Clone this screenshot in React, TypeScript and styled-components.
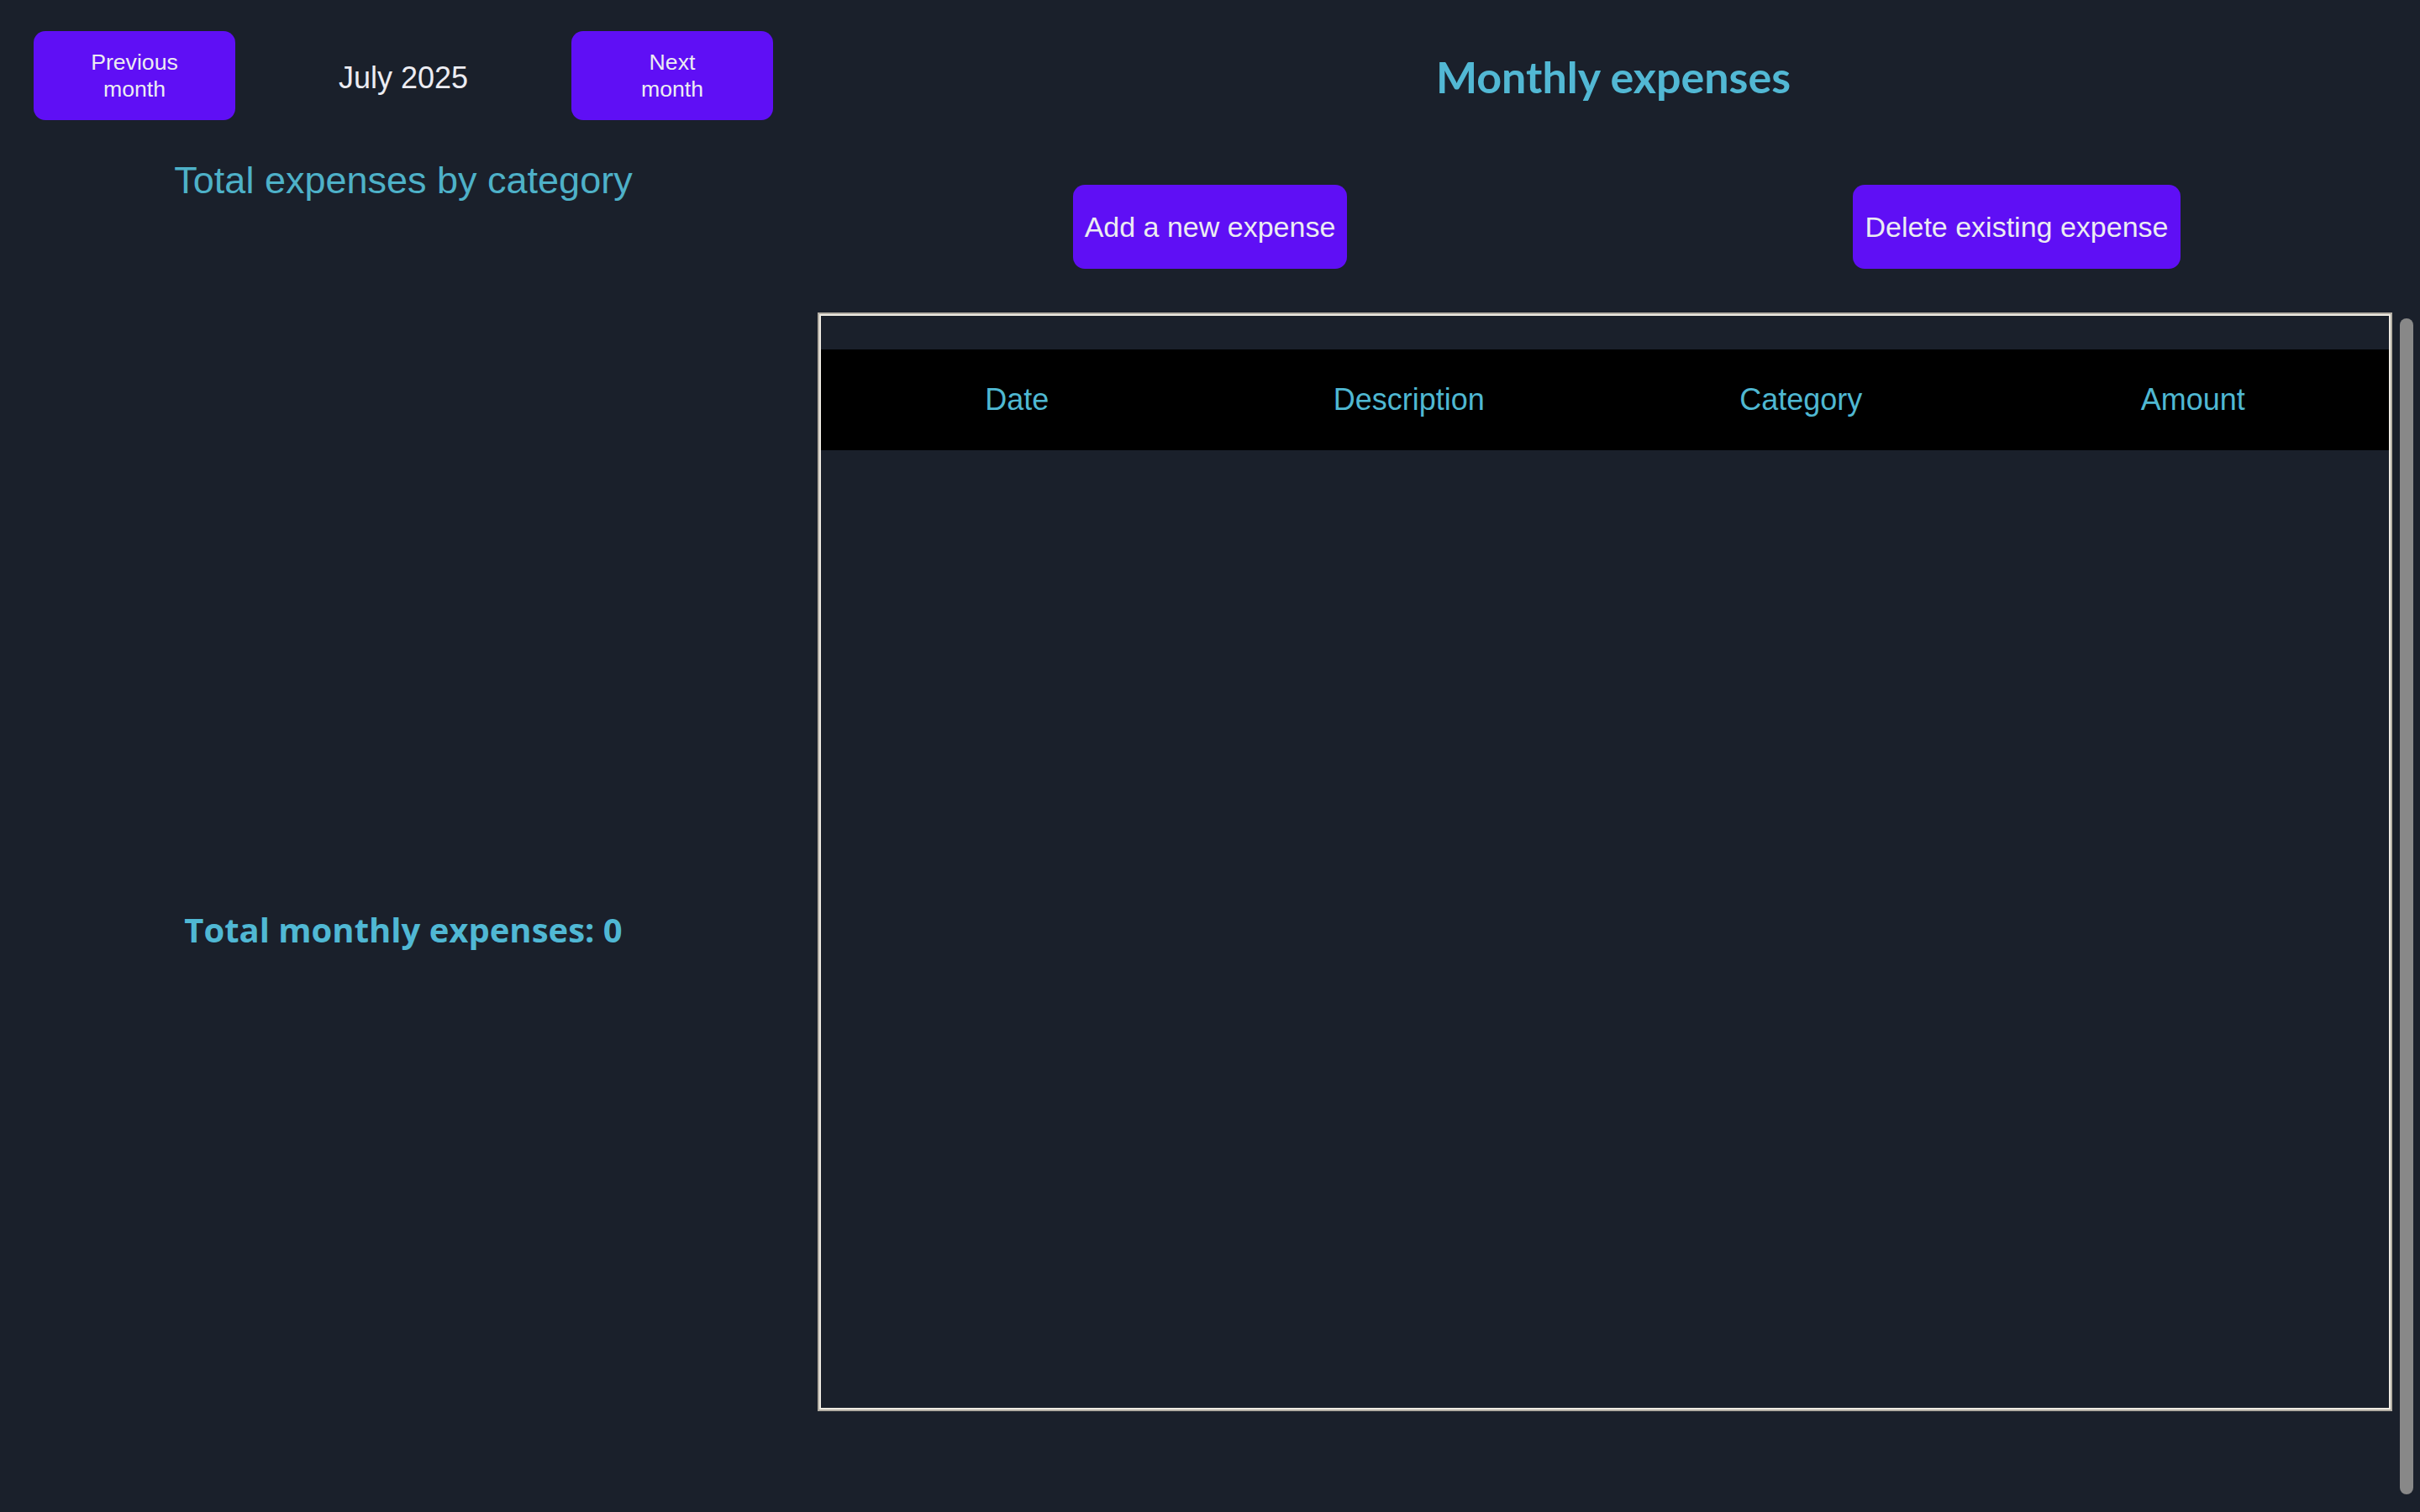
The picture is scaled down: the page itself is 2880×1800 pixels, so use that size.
import React from "react";
import styled, { createGlobalStyle } from "styled-components";

const GlobalStyle = createGlobalStyle`
  html, body {
    margin: 0;
    padding: 0;
    background: #1a202b;
  }
  body {
    font-family: "Liberation Sans", Arial, sans-serif;
    color: #ebebf0;
  }
  * { box-sizing: border-box; }
`;

const Page = styled.div`
  display: grid;
  grid-template-columns: 960px 1fr;
  height: 1800px;
  overflow: hidden;
  background: #1a202b;
`;

const LeftColumn = styled.section`
  display: flex;
  flex-direction: column;
  align-items: stretch;
  padding: 37px 40px 0;
`;

const NavRow = styled.div`
  display: flex;
  align-items: center;
  justify-content: space-between;
`;

const NavButton = styled.button`
  width: 240px;
  height: 106px;
  border: none;
  border-radius: 14px;
  background: #5f0ff5;
  color: #ececf2;
  font-family: "Liberation Sans", Arial, sans-serif;
  font-size: 26.67px;
  line-height: 32px;
  padding: 0 62px;
  text-align: center;
  cursor: pointer;
`;

const MonthLabel = styled.div`
  font-size: 36px;
  margin-top: 6px;
  color: #ececf2;
`;

const CategoryTitle = styled.h2`
  margin: 47px 0 0;
  font-size: 45px;
  line-height: 50px;
  font-weight: 400;
  text-align: center;
  color: #4eb1c8;
`;

const ChartArea = styled.div`
  height: 845px;
`;

const TotalLine = styled.div`
  text-align: center;
  font-family: "Open Sans", "Lato", sans-serif;
  font-weight: 700;
  font-size: 40px;
  line-height: 44px;
  color: #50b8d4;
`;

const RightColumn = styled.section`
  display: flex;
  flex-direction: column;
  padding-top: 62px;
`;

const MainTitle = styled.h1`
  margin: 0;
  text-align: center;
  font-family: "Lato", "Open Sans", sans-serif;
  font-weight: 700;
  font-size: 52px;
  line-height: 58px;
  color: #52b8d4;
`;

const ActionRow = styled.div`
  display: grid;
  grid-template-columns: 1fr 1fr;
  justify-items: center;
  margin-top: 100px;
`;

const ActionButton = styled.button`
  height: 100px;
  padding: 0 14px;
  border: none;
  border-radius: 14px;
  background: #5f0ff5;
  color: #ececf2;
  font-family: "Liberation Sans", Arial, sans-serif;
  font-size: 34px;
  cursor: pointer;
`;

const TableSection = styled.div`
  display: flex;
  align-items: flex-start;
  gap: 9px;
  margin-top: 52px;
  padding-left: 13px;
  padding-right: 8px;
`;

const TableBox = styled.div`
  flex: 1;
  height: 1308px;
  border: 2px solid #b3aea4;
  box-shadow: inset 0 0 0 2px #efebe3;
  padding: 2px;
`;

const ExpenseTable = styled.table`
  width: 100%;
  border-collapse: collapse;
  table-layout: fixed;
  margin-top: 40px;
`;

const HeadRow = styled.tr`
  background: #000;
  height: 120px;
`;

const HeadCell = styled.th`
  font-family: "Liberation Sans", Arial, sans-serif;
  font-weight: 400;
  font-size: 36px;
  color: #4fb8d2;
  text-align: center;
`;

const ScrollThumb = styled.div`
  width: 16px;
  height: 1400px;
  margin-top: 7px;
  border-radius: 8px;
  background: #888888;
`;

export default function App() {
  return (
    <>
      <GlobalStyle />
      <Page>
        <LeftColumn>
          <NavRow>
            <NavButton>Previous month</NavButton>
            <MonthLabel>July 2025</MonthLabel>
            <NavButton>Next month</NavButton>
          </NavRow>
          <CategoryTitle>Total expenses by category</CategoryTitle>
          <ChartArea />
          <TotalLine>Total monthly expenses: 0</TotalLine>
        </LeftColumn>
        <RightColumn>
          <MainTitle>Monthly expenses</MainTitle>
          <ActionRow>
            <ActionButton>Add a new expense</ActionButton>
            <ActionButton>Delete existing expense</ActionButton>
          </ActionRow>
          <TableSection>
            <TableBox>
              <ExpenseTable>
                <thead>
                  <HeadRow>
                    <HeadCell>Date</HeadCell>
                    <HeadCell>Description</HeadCell>
                    <HeadCell>Category</HeadCell>
                    <HeadCell>Amount</HeadCell>
                  </HeadRow>
                </thead>
                <tbody />
              </ExpenseTable>
            </TableBox>
            <ScrollThumb />
          </TableSection>
        </RightColumn>
      </Page>
    </>
  );
}
